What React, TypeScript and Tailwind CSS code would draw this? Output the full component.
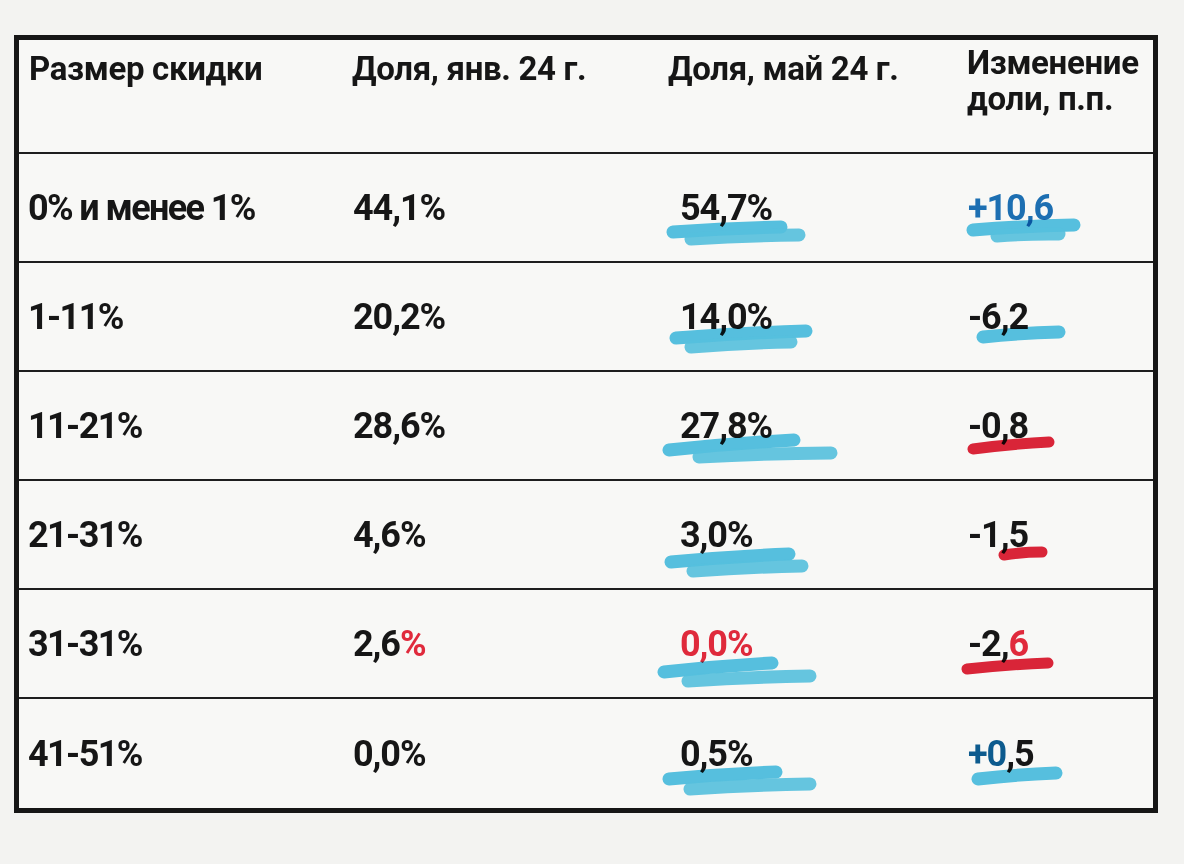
import type { ReactNode } from "react"

const BLUE_MARK = "#58c5e6"
const RED_MARK = "#df263a"

type Stroke = [number, number, number, number]
type Mark = { color: string; strokes: Stroke[] }

type Row = {
  label: string
  jan: ReactNode
  may: ReactNode
  mayMark: Mark
  delta: ReactNode
  deltaMark: Mark
}

const blue = (...strokes: Stroke[]): Mark => ({ color: BLUE_MARK, strokes })
const red = (...strokes: Stroke[]): Mark => ({ color: RED_MARK, strokes })

const rows: Row[] = [
  {
    label: "0% и менее 1%",
    jan: "44,1%",
    may: "54,7%",
    mayMark: blue([14, 78, 122, 73], [32, 85, 140, 81]),
    delta: <span className="text-[#1d6fb2]">+10,6</span>,
    deltaMark: blue([16, 76, 117, 71], [40, 82, 102, 80]),
  },
  {
    label: "1-11%",
    jan: "20,2%",
    may: "14,0%",
    mayMark: blue([17, 75, 147, 68], [32, 84, 132, 79]),
    delta: "-6,2",
    deltaMark: blue([26, 74, 102, 69]),
  },
  {
    label: "11-21%",
    jan: "28,6%",
    may: "27,8%",
    mayMark: blue([10, 78, 135, 68], [40, 85, 172, 81]),
    delta: "-0,8",
    deltaMark: red([16, 77, 92, 70]),
  },
  {
    label: "21-31%",
    jan: "4,6%",
    may: "3,0%",
    mayMark: blue([12, 81, 130, 73], [34, 90, 143, 85]),
    delta: "-1,5",
    deltaMark: red([47, 74, 85, 71]),
  },
  {
    label: "31-31%",
    jan: (
      <>
        2,6<span className="text-[#e02a3c]">%</span>
      </>
    ),
    may: <span className="text-[#df2a3b]">0,0%</span>,
    mayMark: blue([5, 82, 113, 73], [29, 91, 151, 86]),
    delta: (
      <>
        -2,<span className="text-[#e02a3c]">6</span>
      </>
    ),
    deltaMark: red([10, 79, 91, 73]),
  },
  {
    label: "41-51%",
    jan: "0,0%",
    may: "0,5%",
    mayMark: blue([10, 80, 117, 73], [31, 90, 151, 85]),
    delta: (
      <>
        <span className="text-[#0d5b8e]">+0</span>,5
      </>
    ),
    deltaMark: blue([21, 80, 99, 74]),
  },
]

function Marker({ mark }: { mark: Mark }) {
  const isRed = mark.color === RED_MARK
  return (
    <svg
      className="pointer-events-none absolute left-0 top-0 overflow-visible mix-blend-multiply"
      width="200"
      height="107"
      viewBox="0 0 200 107"
      fill="none"
    >
      {mark.strokes.map(([x1, y1, x2, y2], i) => (
        <path
          key={i}
          d={`M${x1} ${y1} Q${(x1 + x2) / 2} ${(y1 + y2) / 2 - 1.5} ${x2} ${y2}`}
          stroke={mark.color}
          strokeWidth={isRed ? 11 : 13}
          strokeLinecap="round"
          opacity={i === 0 ? 1 : 0.9}
        />
      ))}
    </svg>
  )
}

export default function App() {
  return (
    <div className="min-h-screen w-full bg-[#f3f3f1] pl-[14px] pt-[35px]">
      <div className="w-[1144px] border-[5px] border-[#161616] bg-[#f8f8f6] font-['Roboto','Liberation_Sans',sans-serif] font-bold text-[#161616]">
        <div className="grid h-[114px] grid-cols-[324px_316px_298px_1fr] border-b-2 border-[#1e1e1e] text-[33px] leading-[36px] tracking-[-0.01em]">
          <div className="pl-[10px] pt-[11px]">Размер скидки</div>
          <div className="pl-[9px] pt-[11px]">Доля, янв. 24 г.</div>
          <div className="pl-[9px] pt-[11px]">Доля, май 24 г.</div>
          <div className="pl-[10px] pt-[5px]">
            Изменение
            <br />
            доли, п.п.
          </div>
        </div>

        {rows.map((row, i) => (
          <div
            key={row.label}
            className={`grid h-[109px] grid-cols-[324px_316px_298px_1fr] items-center text-[36px] leading-none tracking-[-0.03em] ${
              i < rows.length - 1 ? "border-b-2 border-[#1e1e1e]" : ""
            }`}
          >
            <div className="pl-[9px] tracking-[-0.045em]">{row.label}</div>
            <div className="pl-[10px]">{row.jan}</div>
            <div className="relative flex h-full items-center pl-[21px]">
              <span className="relative">{row.may}</span>
              <Marker mark={row.mayMark} />
            </div>
            <div className="relative flex h-full items-center pl-[11px]">
              <span className="relative">{row.delta}</span>
              <Marker mark={row.deltaMark} />
            </div>
          </div>
        ))}
      </div>
    </div>
  )
}
